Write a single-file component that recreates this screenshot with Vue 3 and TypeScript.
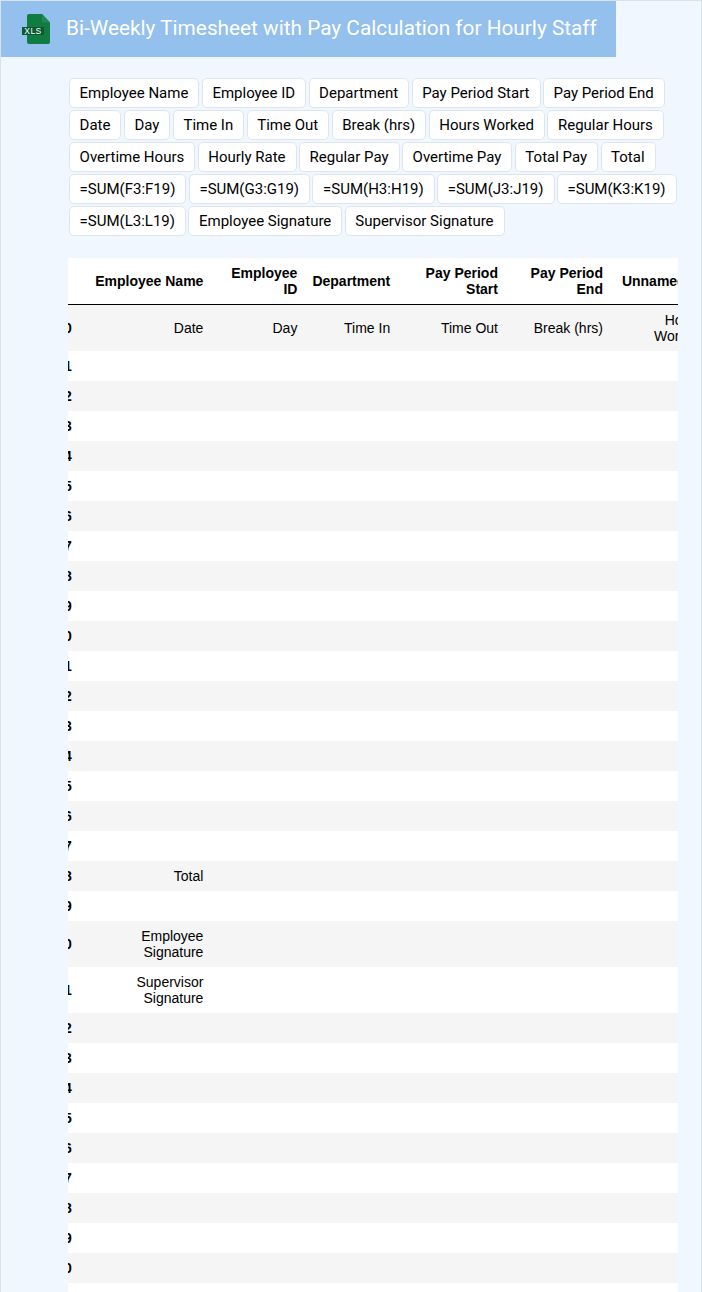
<script setup lang="ts">
const chips: string[] = [
  'Employee Name','Employee ID','Department','Pay Period Start','Pay Period End',
  'Date','Day','Time In','Time Out','Break (hrs)','Hours Worked','Regular Hours',
  'Overtime Hours','Hourly Rate','Regular Pay','Overtime Pay','Total Pay','Total',
  '=SUM(F3:F19)','=SUM(G3:G19)','=SUM(H3:H19)','=SUM(J3:J19)','=SUM(K3:K19)',
  '=SUM(L3:L19)','Employee Signature','Supervisor Signature'
]
const headers: string[] = ['', 'Employee Name', 'Employee ID', 'Department', 'Pay Period Start', 'Pay Period End', 'Unnamed: 5']
const special: Record<number, string[]> = {
  0: ['Date', 'Day', 'Time In', 'Time Out', 'Break (hrs)', 'Hours Worked'],
  18: ['Total'],
  20: ['Employee Signature'],
  21: ['Supervisor Signature']
}
const rows = Array.from({ length: 32 }, (_, i) => ({
  index: i,
  cells: [0, 1, 2, 3, 4, 5].map((c) => special[i]?.[c] ?? '')
}))
</script>

<template>
  <div class="page">
    <header class="banner">
      <svg class="logo" width="28" height="30" viewBox="0 0 28 30" aria-hidden="true">
        <path d="M5 2a2 2 0 0 1 2-2h13l8 8.500v19.500a2 2 0 0 1-2 2H7a2 2 0 0 1-2-2z" fill="#107c41" />
        <path d="M20 0v6.500a2 2 0 0 0 2 2h6z" fill="#1f8a55" />
        <rect x="0" y="13" width="22" height="8" fill="#0b5a34" />
        <text x="11" y="20" text-anchor="middle" class="logo-text">XLS</text>
      </svg>
      <h1 class="title">Bi-Weekly Timesheet with Pay Calculation for Hourly Staff</h1>
    </header>
    <main class="content">
      <div class="chips">
        <span v-for="chip in chips" :key="chip" class="chip">{{ chip }}</span>
      </div>
      <div class="table-wrap">
        <table class="frame">
          <colgroup>
            <col class="c-index" />
            <col class="c-name" />
            <col class="c-id" />
            <col class="c-dept" />
            <col class="c-start" />
            <col class="c-end" />
            <col class="c-last" />
          </colgroup>
          <thead>
            <tr>
              <th v-for="(h, i) in headers" :key="i">{{ h }}</th>
            </tr>
          </thead>
          <tbody>
            <tr v-for="row in rows" :key="row.index">
              <th>{{ row.index }}</th>
              <td v-for="(cell, c) in row.cells" :key="c">{{ cell }}</td>
            </tr>
          </tbody>
        </table>
      </div>
    </main>
  </div>
</template>

<style>
html, body { margin: 0; background: #f0f7ff; }
</style>

<style scoped>
.page {
  box-sizing: border-box;
  width: 702px;
  height: 1292px;
  overflow: hidden;
  border: 1px solid #d8e3f0;
  border-bottom: 0;
  background: #f0f7ff;
}
.banner {
  display: flex;
  align-items: center;
  gap: 16px;
  width: 615px;
  height: 56px;
  box-sizing: border-box;
  padding-left: 21px;
  background: #93c0ec;
}
.logo { flex: none; }
.logo-text {
  font-family: "Liberation Sans", sans-serif;
  font-size: 8.5px;
  font-weight: 400;
  letter-spacing: .4px;
  fill: #fff;
}
.title {
  margin: 0;
  padding-bottom: 3px;
  font-family: Roboto, sans-serif;
  font-size: 20.8px;
  font-weight: 400;
  color: #fff;
  white-space: nowrap;
}
.content {
  padding: 21px 0 0 67px;
  width: 610px;
}
.chips {
  display: flex;
  flex-wrap: wrap;
  gap: 2px 2.4px;
  padding-left: 1px;
}
.chip {
  box-sizing: border-box;
  height: 30px;
  padding: 0 10px 0 9.6px;
  display: flex;
  align-items: center;
  border: 1px solid #dde6f0;
  border-radius: 5px;
  background: #fff;
  font-family: Roboto, sans-serif;
  font-size: 15px;
  color: #000;
  white-space: nowrap;
}
.table-wrap {
  margin-top: 22px;
  width: 610px;
  overflow: hidden;
}
.frame {
  table-layout: fixed;
  width: 671px;
  margin-left: -30px;
  border-collapse: collapse;
  font-family: Arial, Helvetica, "Liberation Sans", sans-serif;
  font-size: 14px;
  line-height: 16px;
  color: #000;
  background: #fff;
}
.c-index { width: 40.8px; }
.c-name { width: 131.6px; }
.c-id { width: 94px; }
.c-dept { width: 92.8px; }
.c-start { width: 107.8px; }
.c-end { width: 105px; }
.c-last { width: 99px; }
th, td {
  padding: 7px;
  text-align: right;
  vertical-align: middle;
}
th { font-weight: 700; }
td { font-weight: 400; }
thead tr { border-bottom: 1px solid #000; }
tbody tr:nth-child(odd) { background: #f5f5f5; }
tbody tr:nth-child(even) { background: #fff; }
</style>
